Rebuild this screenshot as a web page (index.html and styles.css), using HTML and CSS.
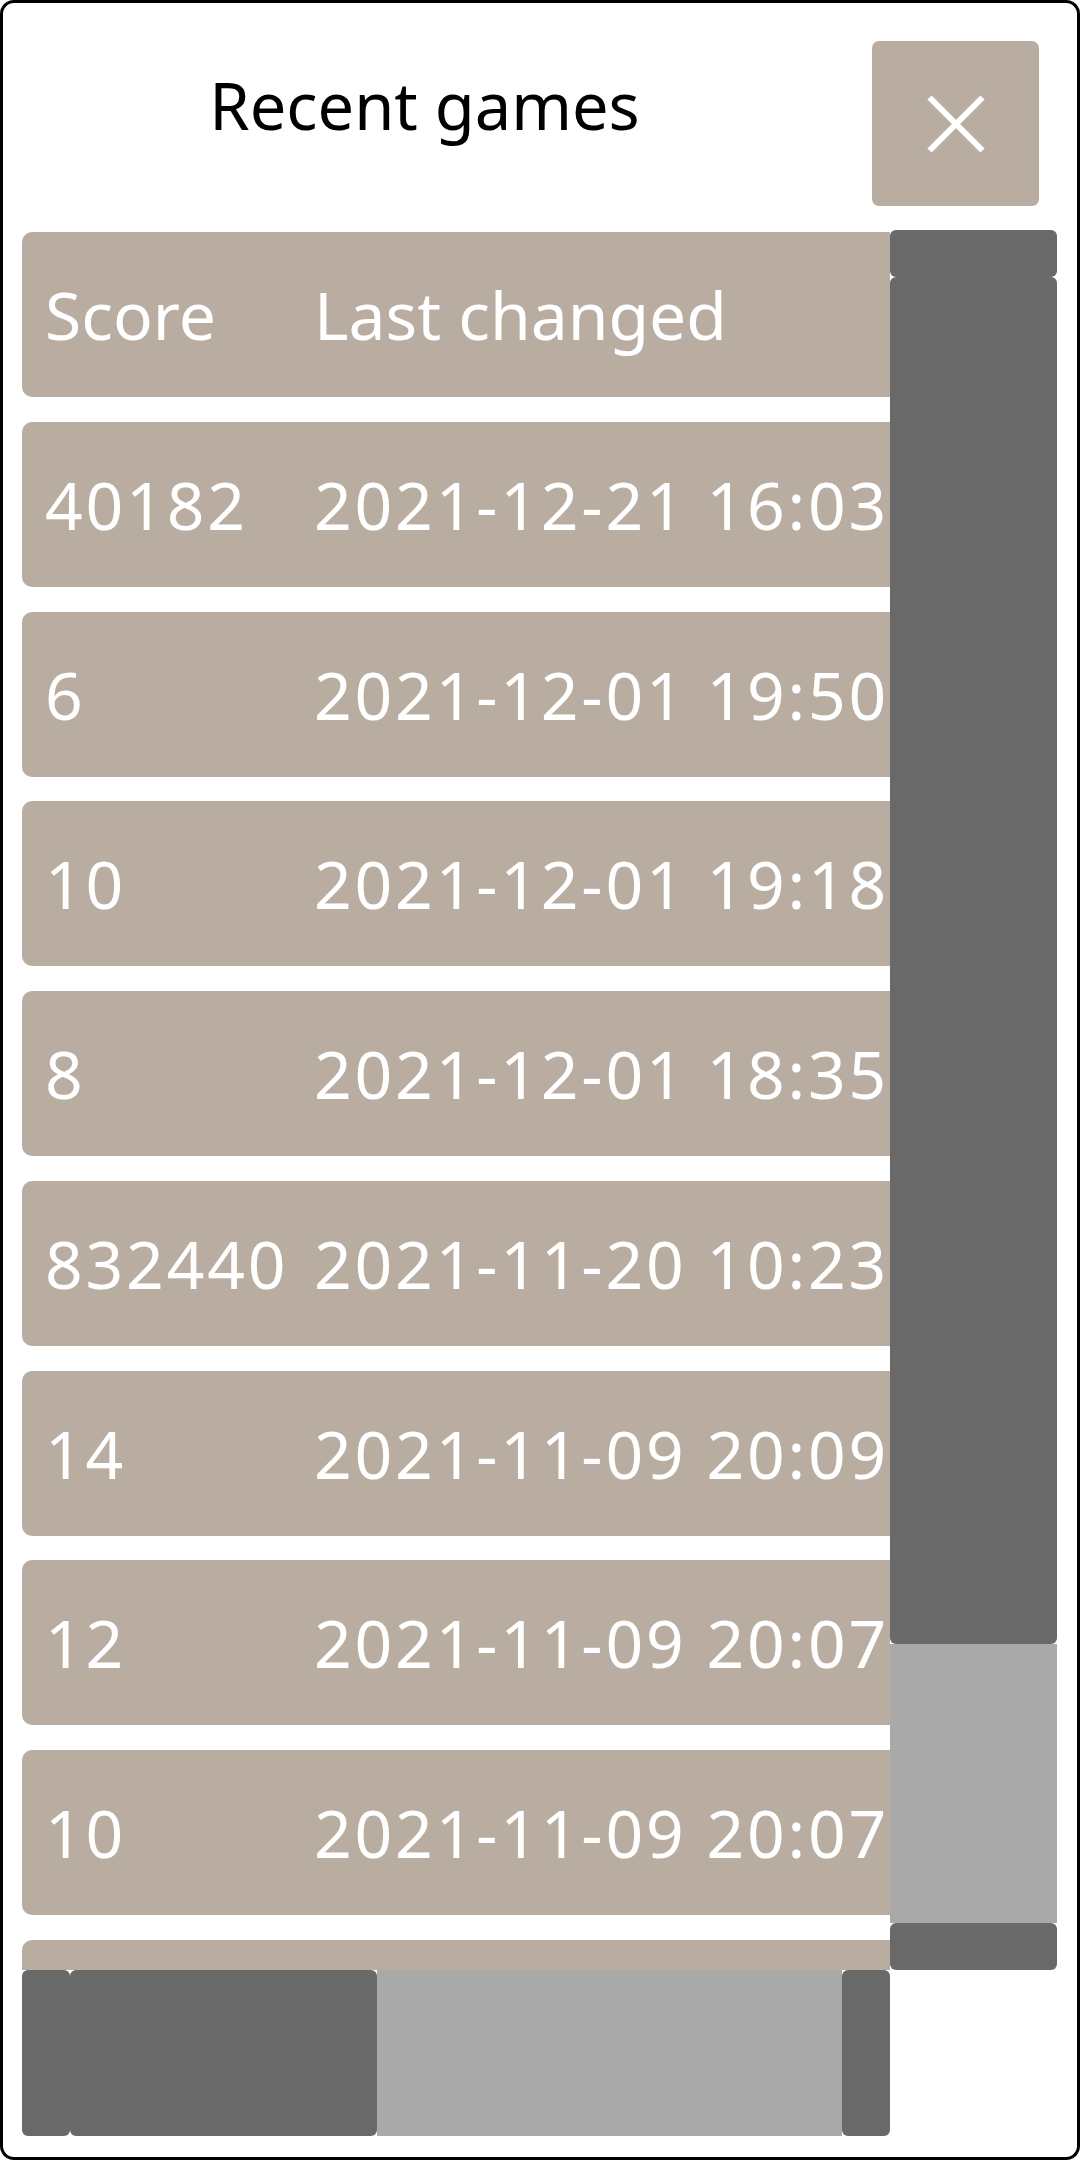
FILE: index.html
```html
<!DOCTYPE html>
<html lang="en">
<head>
<meta charset="utf-8">
<title>Recent games</title>
<link rel="stylesheet" href="styles.css">
</head>
<body>
<div class="frame">
  <div class="header">
    <h1 class="title">Recent games</h1>
    <button class="close" aria-label="Close">
      <svg class="close-icon" viewBox="0 0 58 58" width="58" height="58">
        <line x1="2.5" y1="2.5" x2="55.5" y2="55.5"/>
        <line x1="55.5" y1="2.5" x2="2.5" y2="55.5"/>
      </svg>
    </button>
  </div>
  <div class="scroll-area">
    <div class="viewport">
      <div class="row head"><span class="c1">Score</span><span class="c2">Last changed</span></div>
      <div class="row"><span class="c1 num">40182</span><span class="c2 num">2021-12-21 16:03</span></div>
      <div class="row"><span class="c1 num">6</span><span class="c2 num">2021-12-01 19:50</span></div>
      <div class="row"><span class="c1 num">10</span><span class="c2 num">2021-12-01 19:18</span></div>
      <div class="row"><span class="c1 num">8</span><span class="c2 num">2021-12-01 18:35</span></div>
      <div class="row"><span class="c1 num">832440</span><span class="c2 num">2021-11-20 10:23</span></div>
      <div class="row"><span class="c1 num">14</span><span class="c2 num">2021-11-09 20:09</span></div>
      <div class="row"><span class="c1 num">12</span><span class="c2 num">2021-11-09 20:07</span></div>
      <div class="row"><span class="c1 num">10</span><span class="c2 num">2021-11-09 20:07</span></div>
      <div class="row"></div>
    </div>
    <div class="vscroll">
      <div class="sb-btn vbtn"></div>
      <div class="sb-thumb vthumb"></div>
      <div class="sb-track vtrack"></div>
      <div class="sb-btn vbtn"></div>
    </div>
    <div class="hscroll">
      <div class="sb-btn hbtn"></div>
      <div class="sb-thumb hthumb"></div>
      <div class="sb-track htrack"></div>
      <div class="sb-btn hbtn"></div>
    </div>
    <div class="corner"></div>
  </div>
</div>
</body>
</html>
```
FILE: styles.css
```css
html, body {
  margin: 0;
  padding: 0;
  background: #ffffff;
}

body {
  font-family: "Noto Sans", "Open Sans", sans-serif;
}

.frame {
  box-sizing: border-box;
  width: 1080px;
  height: 2160px;
  border: 3px solid #000000;
  border-radius: 14px;
  background: #ffffff;
  overflow: hidden;
}

.header {
  display: flex;
  align-items: flex-start;
  margin: 38px 38px 0 0;
}

.title {
  flex: 1;
  margin: 0;
  padding: 20px 26px 0 0;
  text-align: center;
  font-size: 65px;
  font-weight: normal;
  line-height: normal;
  color: #000000;
}

.close {
  width: 167px;
  height: 165px;
  flex: none;
  border: none;
  padding: 0;
  margin: 0;
  border-radius: 7px;
  background: #b8ada0;
  display: flex;
  align-items: center;
  justify-content: center;
}

.close-icon {
  display: block;
  stroke: #ffffff;
  stroke-width: 6;
  stroke-linecap: butt;
}

.scroll-area {
  display: grid;
  grid-template-columns: 868px 167px;
  grid-template-rows: 1740px 166px;
  margin: 24px 0 0 19px;
}

.viewport {
  overflow: hidden;
  padding-top: 2px;
  box-sizing: border-box;
}

.row {
  display: flex;
  width: 1000px;
  height: 165px;
  margin-bottom: 24.75px;
  padding-left: 23px;
  box-sizing: border-box;
  background: #b8ada0;
  border-radius: 10px;
  color: #ffffff;
  font-size: 66px;
  line-height: 165px;
  white-space: nowrap;
}

.c1 {
  width: 269px;
  flex: none;
}

.c2 {
  flex: none;
}

.num {
  letter-spacing: 2.8px;
}

.vscroll {
  display: flex;
  flex-direction: column;
}

.vbtn {
  height: 47px;
  flex: none;
}

.vthumb {
  height: 1367px;
  flex: none;
}

.vtrack {
  flex: 1;
}

.hscroll {
  display: flex;
}

.hbtn {
  width: 48px;
  flex: none;
}

.hthumb {
  width: 307px;
  flex: none;
}

.htrack {
  flex: 1;
}

.sb-btn,
.sb-thumb {
  background: #696969;
  border-radius: 6px;
}

.sb-track {
  background: #a9a9a9;
}

.corner {
  background: #ffffff;
}
```
